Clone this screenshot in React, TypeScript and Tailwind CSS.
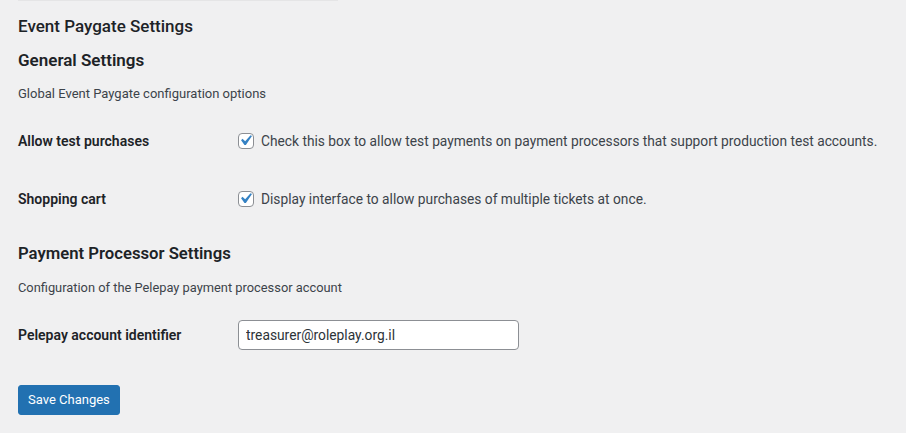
import { useState } from "react";

const font = { fontFamily: 'Roboto, "Noto Sans", sans-serif' };

function Checkbox({ checked, onChange }: { checked: boolean; onChange: () => void }) {
  return (
    <button
      type="button"
      onClick={onChange}
      className="relative w-4 h-4 shrink-0 rounded-[4px] border border-[#8c8f94] bg-white"
    >
      {checked && (
        <svg viewBox="0 0 20 20" className="absolute -left-[4px] -top-[4px] w-[21px] h-[21px]">
          <path
            d="M14.83 4.89l1.34.94-5.81 8.38H9.02L5.78 9.67l1.34-1.25 2.57 2.4z"
            fill="#3582c4"
          />
        </svg>
      )}
    </button>
  );
}

export default function App() {
  const [testPurchases, setTestPurchases] = useState(true);
  const [cart, setCart] = useState(true);
  const [account, setAccount] = useState("treasurer@roleplay.org.il");

  return (
    <div className="min-h-screen w-full bg-[#f0f0f1] text-[#3c434a]" style={font}>
      <div className="ml-[18px] w-[320px] h-px bg-[#e5e5e6]" />

      <div className="pl-[18px]">
        {/* Page title */}
        <h1 className="mt-[13px] text-[17px] leading-[24px] font-medium text-[#1d2327]">
          Event Paygate Settings
        </h1>

        {/* General section */}
        <h2 className="mt-[10px] text-[17px] leading-[24px] font-semibold text-[#1d2327]">
          General Settings
        </h2>
        <p className="mt-[12px] text-[13px] leading-[20px]">
          Global Event Paygate configuration options
        </p>

        <div className="mt-[8px]">
          <div className="flex items-center h-[58px]">
            <div className="w-[220px] text-[14px] font-semibold text-[#1d2327]">
              Allow test purchases
            </div>
            <label className="flex items-center gap-[7px] text-[13.75px] cursor-pointer">
              <Checkbox checked={testPurchases} onChange={() => setTestPurchases(!testPurchases)} />
              Check this box to allow test payments on payment processors that support production test accounts.
            </label>
          </div>
          <div className="flex items-center h-[58px]">
            <div className="w-[220px] text-[14px] font-semibold text-[#1d2327]">
              Shopping cart
            </div>
            <label className="flex items-center gap-[7px] text-[13.75px] cursor-pointer">
              <Checkbox checked={cart} onChange={() => setCart(!cart)} />
              Display interface to allow purchases of multiple tickets at once.
            </label>
          </div>
        </div>

        {/* Payment processor section */}
        <h2 className="mt-[14px] text-[16.7px] leading-[24px] font-semibold text-[#1d2327]">
          Payment Processor Settings
        </h2>
        <p className="mt-[12px] text-[12.85px] leading-[20px]">
          Configuration of the Pelepay payment processor account
        </p>

        <div className="mt-[14px] flex items-center h-[46px]">
          <div className="w-[220px] text-[14px] font-semibold text-[#1d2327]">
            Pelepay account identifier
          </div>
          <input
            value={account}
            onChange={(e) => setAccount(e.target.value)}
            className="w-[281px] h-[30px] px-[7px] rounded-[4px] border border-[#8c8f94] bg-white text-[13.8px] text-[#2c3338] outline-none"
            style={font}
          />
        </div>

        <button
          type="button"
          className="mt-[27px] h-[30px] px-[9px] rounded-[3px] border border-[#2271b1] bg-[#2271b1] text-[13px] text-white"
          style={font}
        >
          Save Changes
        </button>
      </div>
    </div>
  );
}
